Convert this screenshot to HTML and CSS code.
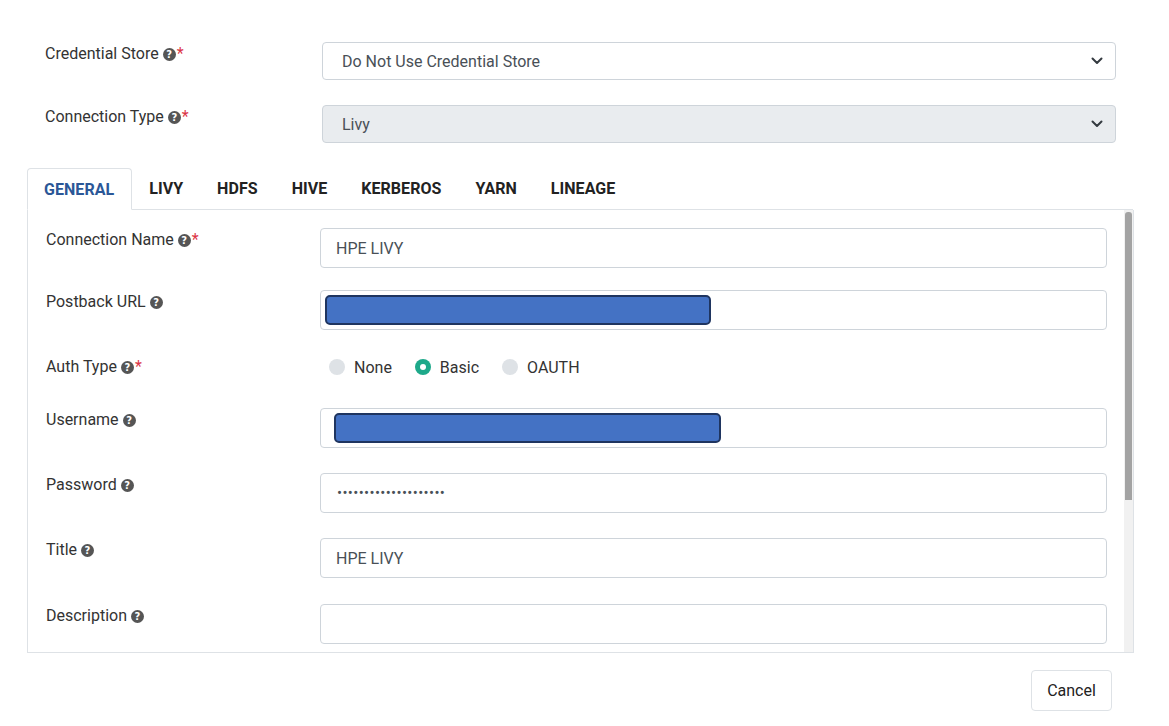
FILE: index.html
```html
<!DOCTYPE html>
<html>
<head>
<meta charset="utf-8">
<link rel="stylesheet" href="styles.css">
</head>
<body>
<div class="page">
  <div class="top-row">
    <div class="top-label">Credential Store <span class="help">?</span><span class="req">*</span></div>
    <div class="select">
      <span>Do Not Use Credential Store</span>
      <svg class="chev" width="12" height="8" viewBox="0 0 12 8"><path d="M1.5 1.5 L6 6 L10.5 1.5" fill="none" stroke="#343a40" stroke-width="2" stroke-linecap="round" stroke-linejoin="round"/></svg>
    </div>
  </div>
  <div class="top-row">
    <div class="top-label">Connection Type <span class="help">?</span><span class="req">*</span></div>
    <div class="select disabled">
      <span>Livy</span>
      <svg class="chev" width="12" height="8" viewBox="0 0 12 8"><path d="M1.5 1.5 L6 6 L10.5 1.5" fill="none" stroke="#343a40" stroke-width="2" stroke-linecap="round" stroke-linejoin="round"/></svg>
    </div>
  </div>

  <div class="tabs">
    <div class="tab active">GENERAL</div>
    <div class="tab">LIVY</div>
    <div class="tab">HDFS</div>
    <div class="tab">HIVE</div>
    <div class="tab">KERBEROS</div>
    <div class="tab">YARN</div>
    <div class="tab">LINEAGE</div>
    <div class="tab-fill"></div>
  </div>

  <div class="panel">
    <div class="panel-content">
      <div class="row r-first">
        <div class="label">Connection Name <span class="help">?</span><span class="req">*</span></div>
        <div class="input">HPE LIVY</div>
      </div>
      <div class="row">
        <div class="label">Postback URL <span class="help">?</span></div>
        <div class="input redact-wrap"><div class="redact r1"></div></div>
      </div>
      <div class="row radio-row">
        <div class="label">Auth Type <span class="help">?</span><span class="req">*</span></div>
        <div class="radios">
          <span class="radio"><span class="dot"></span>None</span>
          <span class="radio"><span class="dot on"></span>Basic</span>
          <span class="radio"><span class="dot"></span>OAUTH</span>
        </div>
      </div>
      <div class="row">
        <div class="label">Username <span class="help">?</span></div>
        <div class="input redact-wrap"><div class="redact r2"></div></div>
      </div>
      <div class="row">
        <div class="label">Password <span class="help">?</span></div>
        <div class="input pw">••••••••••••••••••••</div>
      </div>
      <div class="row r-title">
        <div class="label">Title <span class="help">?</span></div>
        <div class="input">HPE LIVY</div>
      </div>
      <div class="row">
        <div class="label">Description <span class="help">?</span></div>
        <div class="input"></div>
      </div>
    </div>
    <div class="scrollbar">
      <div class="thumb"></div>
    </div>
  </div>

  <div class="footer">
    <div class="btn">Cancel</div>
  </div>
</div>
</body>
</html>
```

FILE: styles.css
```css
* { box-sizing: border-box; }
html, body { margin: 0; padding: 0; background: #fff; }
body {
  font-family: Roboto, "Liberation Sans", Arial, sans-serif;
  font-size: 16px;
  color: #333;
  width: 1169px;
  height: 726px;
  overflow: hidden;
}
.page { padding-top: 42px; }

.top-row {
  display: flex;
  align-items: flex-start;
  padding-left: 45px;
  margin-bottom: 25px;
}
.top-label {
  width: 277px;
  line-height: 24px;
  color: #333;
}
.help {
  display: inline-block;
  width: 13px;
  height: 13px;
  border-radius: 50%;
  background: #555;
  color: #fff;
  font-size: 10px;
  font-weight: 700;
  line-height: 13px;
  text-align: center;
  vertical-align: 1px;
  margin-left: 0px;
  font-family: "DejaVu Sans", Arial, sans-serif;
}
.req { color: #dc3545; margin-left: 1px; }

.select {
  width: 794px;
  height: 38px;
  border: 1px solid #ced4da;
  border-radius: 4px;
  display: flex;
  align-items: center;
  justify-content: space-between;
  padding: 0 12px 0 19px;
  color: #495057;
  background: #fff;
}
.select.disabled { background: #e9ecef; }

.tabs {
  display: flex;
  margin-left: 27px;
  width: 1106px;
  margin-top: 1px;
}
.tab {
  height: 42px;
  padding: 0 17px;
  display: flex;
  align-items: center;
  font-size: 16px;
  font-weight: 700;
  color: #222;
  border-bottom: 1px solid #dee2e6;
  letter-spacing: 0.05px;
}
.tab.active {
  color: #2b5797;
  border: 1px solid #dee2e6;
  border-bottom-color: #fff;
  border-radius: 4px 4px 0 0;
  padding: 0 17px 0 16px;
}
.tab-fill { flex: 1; border-bottom: 1px solid #dee2e6; }

.panel {
  margin-left: 27px;
  width: 1107px;
  height: 443px;
  border: 1px solid #dee2e6;
  border-top: none;
  display: flex;
  overflow: hidden;
}
.panel-content {
  flex: 1;
  padding: 18px 0 0 18px;
  overflow: hidden;
}
.scrollbar {
  width: 9px;
  background: #f1f1f1;
  padding: 2px 0 0 1px;
  flex: none;
}
.thumb {
  height: 288px;
  width: 7px;
  background: #a3a3a3;
  border-radius: 3px 3px 0 0;
}

.row {
  display: flex;
  align-items: flex-start;
  margin-bottom: 25px;
}
.row.r-first { margin-bottom: 22px; }
.row.r-title { margin-bottom: 26px; }
.label {
  width: 274px;
  line-height: 24px;
  color: #333;
}
.input {
  width: 787px;
  height: 40px;
  border: 1px solid #ced4da;
  border-radius: 4px;
  padding: 0 15px;
  display: flex;
  align-items: center;
  color: #495057;
  flex: none;
}
.pw { font-size: 15px; letter-spacing: 0.35px; color: #495057; padding-left: 16px; }
.redact-wrap { padding: 0; }
.redact {
  height: 30px;
  background: #4472c4;
  border: 2px solid #1f3560;
  border-radius: 5px;
}
.r1 { width: 386px; margin-left: 4px; }
.r2 { width: 387px; margin-left: 13px; }

.radio-row { margin-top: 26px; margin-bottom: 30px; }
.radio-row .label { line-height: 22px; }
.radios {
  display: flex;
  align-items: center;
  height: 22px;
  padding-left: 9px;
}
.radio {
  display: inline-flex;
  align-items: center;
  margin-right: 23px;
  color: #333;
}
.dot {
  width: 16px;
  height: 16px;
  border-radius: 50%;
  background: #dee2e6;
  margin-right: 9px;
}
.dot.on {
  background: #1ea98a;
  position: relative;
}
.dot.on::after {
  content: "";
  position: absolute;
  left: 5px; top: 5px;
  width: 6px; height: 6px;
  border-radius: 50%;
  background: #fff;
}

.footer {
  display: flex;
  justify-content: flex-end;
  padding-right: 57px;
  margin-top: 17px;
}
.btn {
  width: 81px;
  height: 41px;
  border: 1px solid #dee2e6;
  border-radius: 4px;
  display: flex;
  align-items: center;
  justify-content: center;
  color: #222;
  background: #fff;
}
```
